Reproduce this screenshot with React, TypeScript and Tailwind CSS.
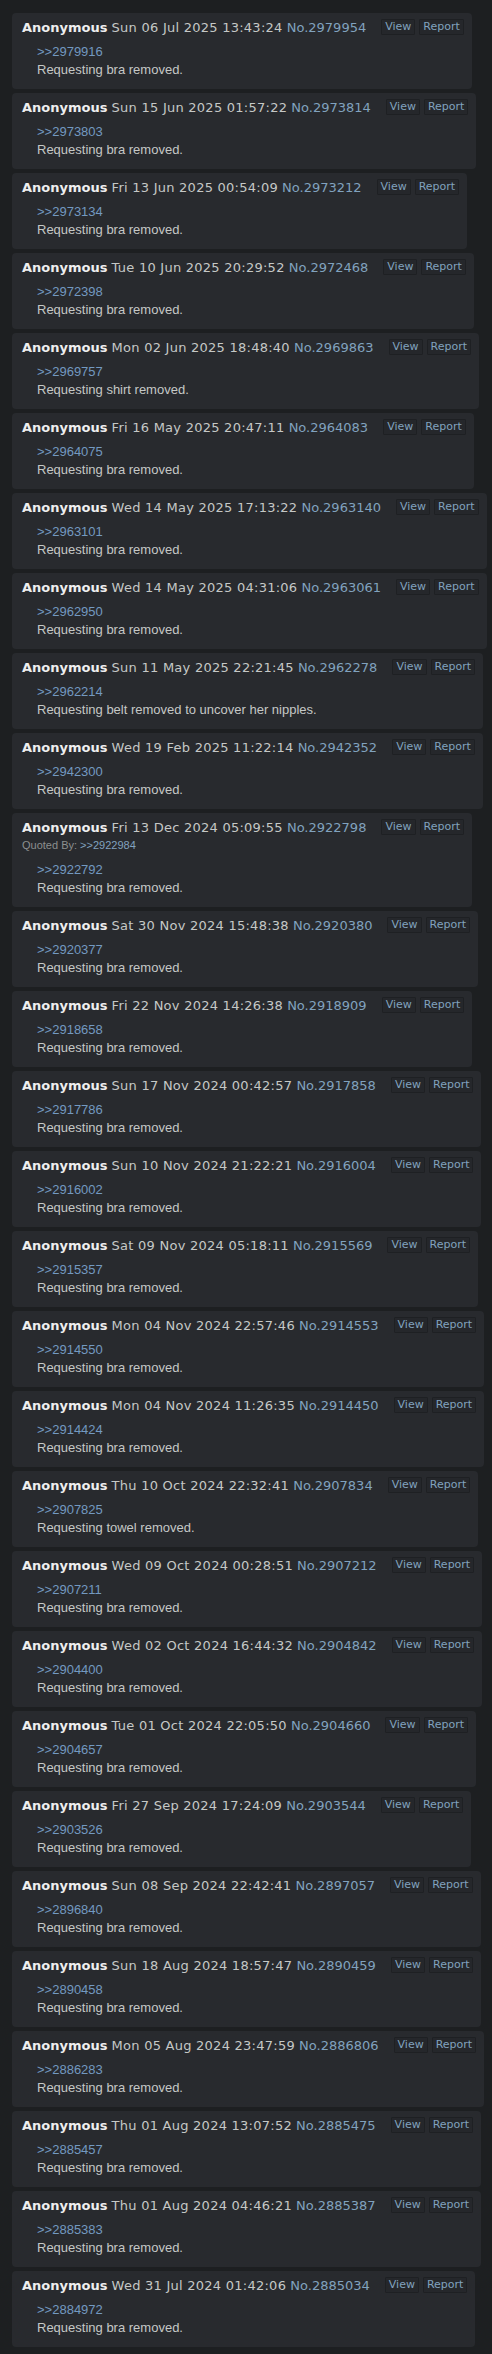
type Post = {
  date: string
  no: string
  quote: string
  text: string
  quotedBy?: string
}

const posts: Post[] = [
  { date: 'Sun 06 Jul 2025 13:43:24', no: '2979954', quote: '2979916', text: 'Requesting bra removed.' },
  { date: 'Sun 15 Jun 2025 01:57:22', no: '2973814', quote: '2973803', text: 'Requesting bra removed.' },
  { date: 'Fri 13 Jun 2025 00:54:09', no: '2973212', quote: '2973134', text: 'Requesting bra removed.' },
  { date: 'Tue 10 Jun 2025 20:29:52', no: '2972468', quote: '2972398', text: 'Requesting bra removed.' },
  { date: 'Mon 02 Jun 2025 18:48:40', no: '2969863', quote: '2969757', text: 'Requesting shirt removed.' },
  { date: 'Fri 16 May 2025 20:47:11', no: '2964083', quote: '2964075', text: 'Requesting bra removed.' },
  { date: 'Wed 14 May 2025 17:13:22', no: '2963140', quote: '2963101', text: 'Requesting bra removed.' },
  { date: 'Wed 14 May 2025 04:31:06', no: '2963061', quote: '2962950', text: 'Requesting bra removed.' },
  {
    date: 'Sun 11 May 2025 22:21:45',
    no: '2962278',
    quote: '2962214',
    text: 'Requesting belt removed to uncover her nipples.',
  },
  { date: 'Wed 19 Feb 2025 11:22:14', no: '2942352', quote: '2942300', text: 'Requesting bra removed.' },
  {
    date: 'Fri 13 Dec 2024 05:09:55',
    no: '2922798',
    quote: '2922792',
    text: 'Requesting bra removed.',
    quotedBy: '2922984',
  },
  { date: 'Sat 30 Nov 2024 15:48:38', no: '2920380', quote: '2920377', text: 'Requesting bra removed.' },
  { date: 'Fri 22 Nov 2024 14:26:38', no: '2918909', quote: '2918658', text: 'Requesting bra removed.' },
  { date: 'Sun 17 Nov 2024 00:42:57', no: '2917858', quote: '2917786', text: 'Requesting bra removed.' },
  { date: 'Sun 10 Nov 2024 21:22:21', no: '2916004', quote: '2916002', text: 'Requesting bra removed.' },
  { date: 'Sat 09 Nov 2024 05:18:11', no: '2915569', quote: '2915357', text: 'Requesting bra removed.' },
  { date: 'Mon 04 Nov 2024 22:57:46', no: '2914553', quote: '2914550', text: 'Requesting bra removed.' },
  { date: 'Mon 04 Nov 2024 11:26:35', no: '2914450', quote: '2914424', text: 'Requesting bra removed.' },
  { date: 'Thu 10 Oct 2024 22:32:41', no: '2907834', quote: '2907825', text: 'Requesting towel removed.' },
  { date: 'Wed 09 Oct 2024 00:28:51', no: '2907212', quote: '2907211', text: 'Requesting bra removed.' },
  { date: 'Wed 02 Oct 2024 16:44:32', no: '2904842', quote: '2904400', text: 'Requesting bra removed.' },
  { date: 'Tue 01 Oct 2024 22:05:50', no: '2904660', quote: '2904657', text: 'Requesting bra removed.' },
  { date: 'Fri 27 Sep 2024 17:24:09', no: '2903544', quote: '2903526', text: 'Requesting bra removed.' },
  { date: 'Sun 08 Sep 2024 22:42:41', no: '2897057', quote: '2896840', text: 'Requesting bra removed.' },
  { date: 'Sun 18 Aug 2024 18:57:47', no: '2890459', quote: '2890458', text: 'Requesting bra removed.' },
  { date: 'Mon 05 Aug 2024 23:47:59', no: '2886806', quote: '2886283', text: 'Requesting bra removed.' },
  { date: 'Thu 01 Aug 2024 13:07:52', no: '2885475', quote: '2885457', text: 'Requesting bra removed.' },
  { date: 'Thu 01 Aug 2024 04:46:21', no: '2885387', quote: '2885383', text: 'Requesting bra removed.' },
  { date: 'Wed 31 Jul 2024 01:42:06', no: '2885034', quote: '2884972', text: 'Requesting bra removed.' },
]

function PostButton({ label }: { label: string }) {
  return (
    <a
      href="#"
      className="block rounded-[1px] border border-[#1e2023] bg-[#25272b] px-[3px] text-[11px] leading-[14px] text-[#81a2be]"
    >
      {label}
    </a>
  )
}

function PostCard({ post }: { post: Post }) {
  return (
    <div className="w-fit rounded-[4px] bg-[#282a2e] pt-[6px] pr-[8px] pb-[10px] pl-[10px]">
      <div className="flex items-start font-['DejaVu_Sans',Verdana,sans-serif]">
        <div className="whitespace-nowrap text-[13px] leading-[17px]">
          <span className="font-bold text-[#eeeeee]">Anonymous</span>{' '}
          <span className="tracking-[0.25px] text-[#c5c8c6]">{post.date}</span>{' '}
          <a href="#" className="text-[#81a2be]">
            No.{post.no}
          </a>
        </div>
        <div className="ml-[15px] flex gap-[4px]">
          <PostButton label="View" />
          <PostButton label="Report" />
        </div>
      </div>
      {post.quotedBy && (
        <div className="font-['Liberation_Sans',Arial,sans-serif] text-[11px] leading-[18px] text-[#8c8f8e]">
          Quoted By:{' '}
          <a href="#" className="text-[#81a2be]">
            &gt;&gt;{post.quotedBy}
          </a>
        </div>
      )}
      <div className="mt-[7px] pl-[15px] font-['Liberation_Sans',Arial,sans-serif] text-[13px] leading-[18px]">
        <a href="#" className="block text-[#7399c0]">
          &gt;&gt;{post.quote}
        </a>
        <p className="text-[#c5c8c6]">{post.text}</p>
      </div>
    </div>
  )
}

export default function App() {
  return (
    <div className="min-h-screen bg-[#1d1f21] pt-[13px] pl-[12px] pb-[7px]">
      <div className="flex flex-col items-start gap-[4px]">
        {posts.map((post) => (
          <PostCard key={post.no} post={post} />
        ))}
      </div>
    </div>
  )
}
